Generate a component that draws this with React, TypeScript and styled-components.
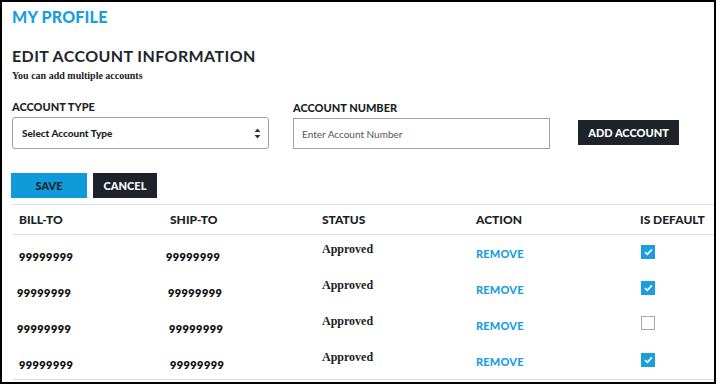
import React, { FC } from 'react';
import styled, { createGlobalStyle } from 'styled-components';

const GlobalStyle = createGlobalStyle`
  html, body {
    margin: 0;
    padding: 0;
    background: #fff;
  }
  body {
    font-family: Lato, 'Open Sans', sans-serif;
    color: #1c1f26;
  }
`;

const Frame = styled.div`
  box-sizing: border-box;
  width: 716px;
  height: 384px;
  border: 2px solid #000;
  padding: 4px 0 0 10px;
  overflow: hidden;
`;

const Brand = styled.h1`
  margin: 0;
  font-size: 16px;
  font-weight: 900;
  color: #1a9ee0;
  letter-spacing: 0.2px;
  line-height: 22px;
`;

const Title = styled.h2`
  margin: 18px 0 0;
  font-size: 16px;
  font-weight: 700;
  color: #22252b;
  letter-spacing: 0.4px;
  line-height: 20px;
`;

const Note = styled.p`
  margin: 4px 0 0;
  font-family: 'Liberation Serif', serif;
  font-size: 10px;
  font-weight: 700;
  color: #222;
`;

const FormRow = styled.div`
  display: flex;
  align-items: flex-end;
  margin-top: 19px;
`;

const Field = styled.div<{ $gap?: number }>`
  display: flex;
  flex-direction: column;
  margin-right: ${(p) => p.$gap ?? 0}px;
`;

const Label = styled.label`
  font-size: 11px;
  font-weight: 900;
  color: #1c1f26;
  line-height: 14px;
  margin-bottom: 3px;
`;

const SelectBox = styled.div`
  box-sizing: border-box;
  width: 257px;
  height: 32px;
  border: 1px solid #a0a0a0;
  border-radius: 3px;
  display: flex;
  align-items: center;
  justify-content: space-between;
  padding: 0 7px 0 9px;
  font-size: 10px;
  font-weight: 900;
  color: #1c1f26;
`;

const TextInput = styled.input`
  box-sizing: border-box;
  width: 257px;
  height: 31px;
  border: 1px solid #a0a0a0;
  padding: 0 8px;
  font-family: Lato, sans-serif;
  font-size: 10px;
  outline: none;
  &::placeholder {
    color: #555;
  }
`;

const Button = styled.button<{ $primary?: boolean; $w: number }>`
  box-sizing: border-box;
  width: ${(p) => p.$w}px;
  height: 25px;
  border: none;
  border-radius: 0;
  background: ${(p) => (p.$primary ? '#0f9ad9' : '#1e222a')};
  color: ${(p) => (p.$primary ? '#1e222a' : '#fff')};
  font-family: Lato, sans-serif;
  font-size: 11px;
  font-weight: 900;
  padding: 0;
  cursor: pointer;
`;

const AddWrap = styled.div`
  margin-left: 28px;
  margin-bottom: 4px;
`;

const Actions = styled.div`
  display: flex;
  gap: 6px;
  margin-top: 24px;
  margin-left: -1px;
`;

const Table = styled.div`
  margin-top: 6px;
  margin-left: 1px;
  border-top: 1px solid #ddd;
  border-bottom: 1px solid #ddd;
`;

const Row = styled.div<{ $head?: boolean }>`
  display: grid;
  grid-template-columns: 151px 152px 154px 164px 1fr;
  align-items: center;
  padding-left: 6px;
  height: ${(p) => (p.$head ? 29 : 36)}px;
  border-bottom: ${(p) => (p.$head ? '1px solid #ddd' : 'none')};
  font-size: ${(p) => (p.$head ? 12 : 10)}px;
  font-weight: 900;
`;

const Num = styled.span<{ $dx?: number }>`
  font-size: 11px;
  font-weight: 800;
  color: #111;
  padding-top: 6px;
  letter-spacing: 0.4px;
  margin-left: ${(p) => p.$dx ?? 0}px;
`;

const Status = styled.span`
  font-family: 'Liberation Serif', serif;
  font-size: 12px;
  font-weight: 700;
  color: #1c1f26;
  padding-bottom: 7px;
`;

const Remove = styled.a`
  color: #1a9ee0;
  font-size: 11px;
  font-weight: 900;
  letter-spacing: 0.2px;
`;

const Check = styled.span<{ $on: boolean }>`
  box-sizing: border-box;
  width: 14px;
  height: 14px;
  margin-left: 1px;
  margin-bottom: 2px;
  display: inline-flex;
  align-items: center;
  justify-content: center;
  background: ${(p) => (p.$on ? '#1a9ee0' : '#fff')};
  border: ${(p) => (p.$on ? 'none' : '1px solid #aaa')};
`;

const Arrows: FC = () => (
  <svg width="7" height="11" viewBox="0 0 7 11">
    <path d="M3.5 0.5 L6.5 4 L0.5 4 Z" fill="#333" />
    <path d="M3.5 10.5 L6.5 7 L0.5 7 Z" fill="#333" />
  </svg>
);

const Tick: FC = () => (
  <svg width="9" height="8" viewBox="0 0 9 8">
    <path d="M1 4.2 L3.4 6.4 L8 1.4" stroke="#fff" strokeWidth="1.7" fill="none" />
  </svg>
);

const accounts = [
  { bill: '99999999', billDx: 0, ship: '99999999', shipDx: -4, def: true },
  { bill: '99999999', billDx: -2, ship: '99999999', shipDx: -2, def: true },
  { bill: '99999999', billDx: -2, ship: '99999999', shipDx: -1, def: false },
  { bill: '99999999', billDx: 0, ship: '99999999', shipDx: 0, def: true }
];

const App: FC = () => {
  return (
    <>
      <GlobalStyle />
      <Frame>
        <Brand>MY PROFILE</Brand>
        <Title>EDIT ACCOUNT INFORMATION</Title>
        <Note>You can add multiple accounts</Note>
        <FormRow>
          <Field $gap={24}>
            <Label>ACCOUNT TYPE</Label>
            <SelectBox>
              Select Account Type
              <Arrows />
            </SelectBox>
          </Field>
          <Field>
            <Label>ACCOUNT NUMBER</Label>
            <TextInput placeholder="Enter Account Number" />
          </Field>
          <AddWrap>
            <Button $w={101}>ADD ACCOUNT</Button>
          </AddWrap>
        </FormRow>
        <Actions>
          <Button $primary $w={76}>SAVE</Button>
          <Button $w={64}>CANCEL</Button>
        </Actions>
        <Table>
          <Row $head>
            <span>BILL-TO</span>
            <span>SHIP-TO</span>
            <span>STATUS</span>
            <span>ACTION</span>
            <span>IS DEFAULT</span>
          </Row>
          {accounts.map((account, index: number) => (
            <Row key={index}>
              <Num $dx={account.billDx}>{account.bill}</Num>
              <Num $dx={account.shipDx}>{account.ship}</Num>
              <Status>Approved</Status>
              <Remove>REMOVE</Remove>
              <span>
                <Check $on={account.def}>{account.def && <Tick />}</Check>
              </span>
            </Row>
          ))}
        </Table>
      </Frame>
    </>
  );
};

export default App;
